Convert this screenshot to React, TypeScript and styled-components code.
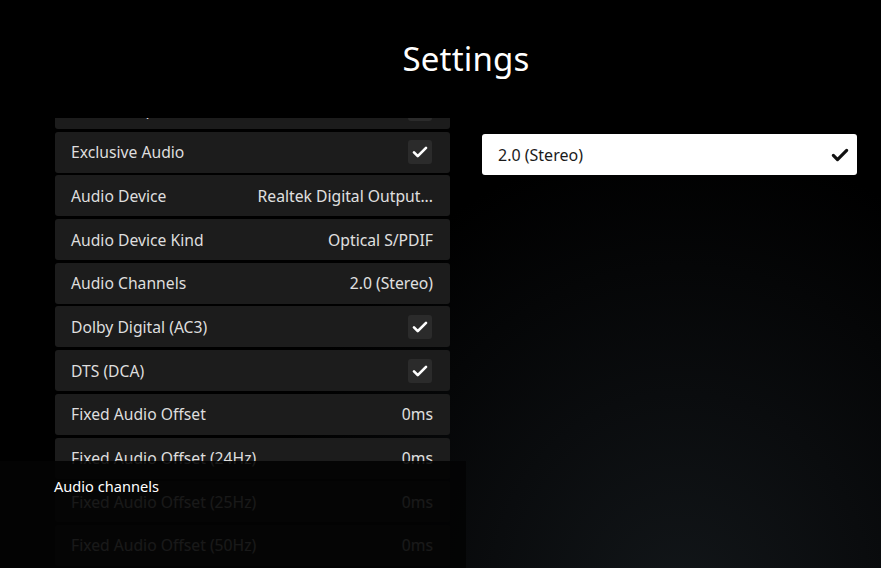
import React from 'react';
import styled, {createGlobalStyle} from 'styled-components';

interface ISettingRow {
  name: string;
  value?: string;
  checked?: boolean;
}

const ROWS: ISettingRow[] = [
  {name: 'Audio Output', checked: true},
  {name: 'Exclusive Audio', checked: true},
  {name: 'Audio Device', value: 'Realtek Digital Output...'},
  {name: 'Audio Device Kind', value: 'Optical S/PDIF'},
  {name: 'Audio Channels', value: '2.0 (Stereo)'},
  {name: 'Dolby Digital (AC3)', checked: true},
  {name: 'DTS (DCA)', checked: true},
  {name: 'Fixed Audio Offset', value: '0ms'},
  {name: 'Fixed Audio Offset (24Hz)', value: '0ms'},
  {name: 'Fixed Audio Offset (25Hz)', value: '0ms'},
  {name: 'Fixed Audio Offset (50Hz)', value: '0ms'}
];

const GlobalStyle = createGlobalStyle`
  html, body {
    margin: 0;
    padding: 0;
    height: 100%;
    background: #000;
  }
  body {
    font-family: "Noto Sans", "Open Sans", sans-serif;
    color: #e6e6e6;
    overflow: hidden;
  }
`;

const Page = styled.div`
  position: relative;
  width: 881px;
  height: 568px;
  display: flex;
  flex-direction: column;
  overflow: hidden;
  background: radial-gradient(
    ellipse 420px 460px at 680px 600px,
    #121619 0%,
    #0a0c0e 45%,
    #000 100%
  );
`;

const Header = styled.header`
  height: 118px;
  flex: none;
  display: flex;
  align-items: center;
  justify-content: center;
  padding-left: 51px;
  box-sizing: border-box;
`;

const Title = styled.h1`
  margin: 0 0 1px 0;
  font-size: 33px;
  font-weight: 400;
  color: #fff;
  letter-spacing: 0.2px;
`;

const Body = styled.div`
  flex: 1;
  display: flex;
  gap: 32px;
  padding: 0 24px 0 55px;
  min-height: 0;
`;

const ListViewport = styled.div`
  width: 395px;
  flex: none;
  overflow: hidden;
`;

const List = styled.ul`
  list-style: none;
  margin: -30px 0 0 0;
  padding: 0;
  display: flex;
  flex-direction: column;
  gap: 2.7px;
`;

const Row = styled.li`
  height: 41px;
  flex: none;
  display: flex;
  align-items: center;
  justify-content: space-between;
  padding: 0 17px 0 16px;
  background: #1c1c1c;
  border-radius: 3px;
  font-size: 15.7px;
  color: #dedede;
`;

const RowValue = styled.span`
  color: #e0e0e0;
`;

const CheckBox = styled.span`
  width: 24px;
  height: 24px;
  margin-right: 1px;
  border-radius: 3px;
  background: #2b2b2b;
  display: flex;
  align-items: center;
  justify-content: center;
`;

const Side = styled.div`
  flex: 1;
  padding-top: 16px;
`;

const Option = styled.div`
  height: 41px;
  display: flex;
  align-items: center;
  justify-content: space-between;
  padding: 0 7px 0 16px;
  background: #fff;
  border-radius: 3px;
  color: #1a1a1a;
  font-size: 16px;
`;

const Footer = styled.div`
  position: absolute;
  left: 0;
  bottom: 0;
  width: 466px;
  height: 107px;
  background: rgba(3, 3, 3, 0.9);
  padding: 15px 0 0 54px;
  box-sizing: border-box;
  font-size: 14.6px;
  color: #fff;
`;

const Check = ({color, size, weight}: {color: string; size: number; weight: number}) => (
  <svg width={size} height={size} viewBox="0 0 24 24" fill="none">
    <path
      d="M4 12.5l5 5L20 6.5"
      stroke={color}
      strokeWidth={weight}
      strokeLinecap="round"
      strokeLinejoin="round"
    />
  </svg>
);

const App = () => {
  return (
    <Page>
      <GlobalStyle />
      <Header>
        <Title>Settings</Title>
      </Header>
      <Body>
        <ListViewport>
          <List>
            {ROWS.map((row: ISettingRow) => (
              <Row key={row.name}>
                <span>{row.name}</span>
                {row.checked ? (
                  <CheckBox>
                    <Check color="#fff" size={18} weight={3.6} />
                  </CheckBox>
                ) : (
                  <RowValue>{row.value}</RowValue>
                )}
              </Row>
            ))}
          </List>
        </ListViewport>
        <Side>
          <Option>
            <span>2.0 (Stereo)</span>
            <Check color="#111" size={20} weight={3.8} />
          </Option>
        </Side>
      </Body>
      <Footer>Audio channels</Footer>
    </Page>
  );
};

export default App;
